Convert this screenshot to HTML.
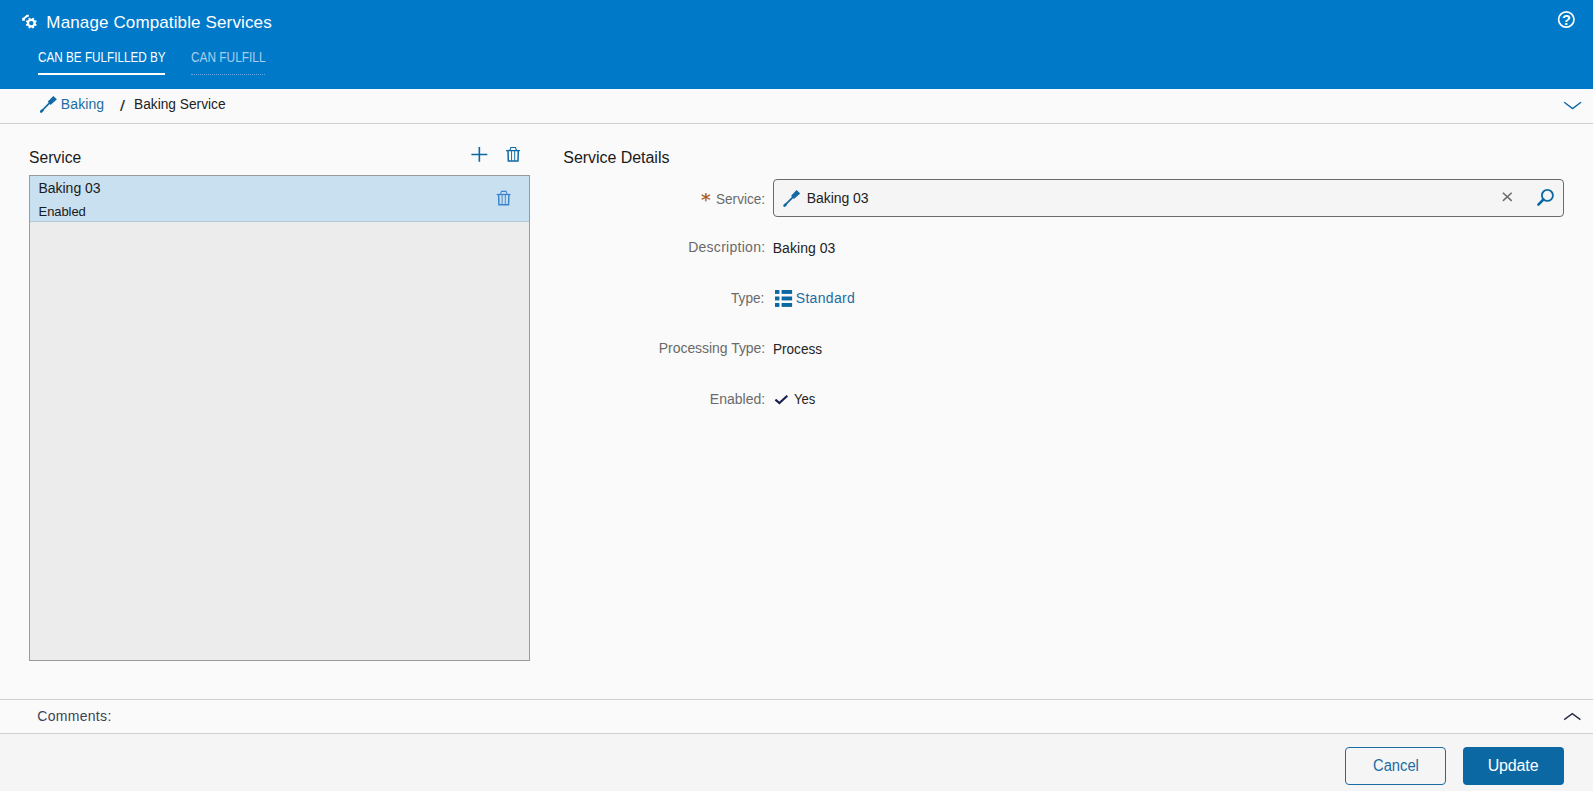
<!DOCTYPE html>
<html lang="en">
<head>
<meta charset="utf-8">
<title>Manage Compatible Services</title>
<style>
html,body{margin:0;padding:0;}
body{width:1593px;height:791px;position:relative;overflow:hidden;background:#fafafa;font-family:"Liberation Sans",sans-serif;}
.abs{position:absolute;}
.t{position:absolute;white-space:nowrap;line-height:1;font-weight:400;}
#hdr{left:0;top:0;width:1593px;height:89px;background:#0079c9;}
#tab1u{left:38px;top:73px;width:127px;height:2px;background:#fff;}
#tab2u{left:191px;top:74px;width:74px;height:0;border-top:1px dotted #62aae3;}
#bcline{left:0;top:123px;width:1593px;height:1px;background:#cfcfcf;}
#list{left:29px;top:175px;width:499px;height:484px;border:1px solid #9a9a9a;background:#ececec;}
#row{left:30px;top:176px;width:499px;height:45px;background:#c9e0f0;border-bottom:1px solid #b4c9d8;}
#inp{left:773px;top:179px;width:789px;height:36px;border:1px solid #6b6b6b;border-radius:4px;background:#f5f5f5;}
#cl1{left:0;top:699px;width:1593px;height:1px;background:#cfcfcf;}
#cl2{left:0;top:733px;width:1593px;height:1px;background:#cfcfcf;}
#foot{left:0;top:734px;width:1593px;height:57px;background:#f5f5f5;}
#btn1{left:1345px;top:747px;width:99px;height:36px;border:1px solid #1c6ca3;border-radius:4px;background:transparent;}
#btn2{left:1463px;top:747px;width:101px;height:38px;border-radius:4px;background:#0c68a3;}
svg{position:absolute;overflow:visible;}
</style>
</head>
<body>
<div id="hdr" class="abs"></div>
<div id="tab1u" class="abs"></div>
<div id="tab2u" class="abs"></div>
<div id="bcline" class="abs"></div>
<div id="list" class="abs"></div>
<div id="row" class="abs"></div>
<div id="inp" class="abs"></div>
<div id="cl1" class="abs"></div>
<div id="cl2" class="abs"></div>
<div id="foot" class="abs"></div>
<div id="btn1" class="abs"></div>
<div id="btn2" class="abs"></div>

<!-- ICONS -->
<svg id="ic_all" width="1593" height="791" viewBox="0 0 1593 791" style="left:0;top:0;">
<path d="M35.70,23.80 L36.75,24.41 L36.07,26.03 L34.90,25.72 L33.92,26.70 L34.23,27.87 L32.61,28.55 L32.00,27.50 L30.60,27.50 L29.99,28.55 L28.37,27.87 L28.68,26.70 L27.70,25.72 L26.53,26.03 L25.85,24.41 L26.90,23.80 L26.90,22.40 L25.85,21.79 L26.53,20.17 L27.70,20.48 L28.68,19.50 L28.37,18.33 L29.99,17.65 L30.60,18.70 L32.00,18.70 L32.61,17.65 L34.23,18.33 L33.92,19.50 L34.90,20.48 L36.07,20.17 L36.75,21.79 L35.70,22.40Z M33.50,23.10 A2.2,2.2 0 1,0 29.10,23.10 A2.2,2.2 0 1,0 33.50,23.10Z" fill="#fff" fill-rule="evenodd"/>
<rect x="22.2" y="17.7" width="2.7" height="3.1" rx="0.6" fill="#fff"/><rect x="26.2" y="14.7" width="2.6" height="2.0" rx="0.5" fill="#fff"/><path d="M23.9,18.6 L27.3,15.7" fill="none" stroke="#fff" stroke-width="2.0"/>
<circle cx="1566.3" cy="19.5" r="7.7" fill="none" stroke="#fff" stroke-width="1.7"/>
<text x="1566.35" y="24.5" text-anchor="middle" font-family="Liberation Sans, sans-serif" font-weight="700" font-size="14.5" fill="#fff">?</text>
<polygon points="53.30,95.90 56.90,99.30 50.60,104.90 47.80,101.50" fill="#1469a3"/><line x1="49.60" y1="102.90" x2="41.20" y2="111.50" stroke="#1469a3" stroke-width="1.75" stroke-linecap="round"/><line x1="42.40" y1="110.30" x2="41.20" y2="111.50" stroke="#1469a3" stroke-width="2.5" stroke-linecap="round"/>
<polygon points="796.60,190.10 800.20,193.50 793.90,199.10 791.10,195.70" fill="#1469a3"/><line x1="792.90" y1="197.10" x2="784.50" y2="205.70" stroke="#1469a3" stroke-width="1.75" stroke-linecap="round"/><line x1="785.70" y1="204.50" x2="784.50" y2="205.70" stroke="#1469a3" stroke-width="2.5" stroke-linecap="round"/>
<polyline points="1564.2,102.3 1572.6,108.6 1581.0,102.3" fill="none" stroke="#0c68a3" stroke-width="1.4"/>
<polyline points="1564.2,719.6 1572.3,713.6 1580.4,719.6" fill="none" stroke="#2a2f45" stroke-width="1.4"/>
<path d="M471.4,154.45 H487.3 M479.35,147.1 V161.8" fill="none" stroke="#0c68a3" stroke-width="1.6"/>
<g fill="none" stroke="#0c68a3"><path d="M508.00,151.00 L508.35,160.95 L517.95,160.95 L518.30,151.00" stroke-width="1.5"/><path d="M511.55,151.00 V160.60 M514.70,151.00 V160.60" stroke-width="0.95"/><path d="M506.10,150.60 H519.90" stroke-width="1.3"/><path d="M509.90,150.20 L510.90,147.45 L515.50,147.45 L516.50,150.20" stroke-width="1.05"/></g>
<g fill="none" stroke="#3b84cc"><path d="M498.60,194.90 L498.95,204.85 L508.55,204.85 L508.90,194.90" stroke-width="1.5"/><path d="M502.15,194.90 V204.50 M505.30,194.90 V204.50" stroke-width="0.95"/><path d="M496.70,194.50 H510.50" stroke-width="1.3"/><path d="M500.50,194.10 L501.50,191.35 L506.10,191.35 L507.10,194.10" stroke-width="1.05"/></g>
<path d="M1502.9,192.7 L1511.7,200.9 M1511.7,192.7 L1502.9,200.9" fill="none" stroke="#6a6a6a" stroke-width="1.5"/>
<circle cx="1547.4" cy="195.4" r="5.5" fill="none" stroke="#0c68a3" stroke-width="1.8"/>
<line x1="1543.4" y1="199.5" x2="1538.4" y2="204.6" stroke="#0c68a3" stroke-width="2.6" stroke-linecap="round"/>
<rect x="775" y="290.0" width="4.4" height="3.9" fill="#0c68a3"/>
<rect x="781.6" y="290.0" width="10.5" height="3.9" fill="#0c68a3"/>
<rect x="775" y="296.5" width="4.4" height="3.9" fill="#0c68a3"/>
<rect x="781.6" y="296.5" width="10.5" height="3.9" fill="#0c68a3"/>
<rect x="775" y="303.0" width="4.4" height="3.9" fill="#0c68a3"/>
<rect x="781.6" y="303.0" width="10.5" height="3.9" fill="#0c68a3"/>
<polyline points="775.4,399.6 779.4,403.0 787.3,395.7" fill="none" stroke="#17204d" stroke-width="2.1"/>
</svg>

<span id="t_title" class="t" style="left:46.35px;top:14.21px;font-size:17px;color:#fff;letter-spacing:0.130px;">Manage Compatible Services</span>
<span id="t_tab1" class="t" style="left:37.54px;top:50.15px;font-size:14px;color:#fff;letter-spacing:0.000px;transform:scaleX(0.8372);transform-origin:0 0;">CAN BE FULFILLED BY</span>
<span id="t_tab2" class="t" style="left:190.66px;top:50.15px;font-size:14px;color:#a9cfee;letter-spacing:0.000px;transform:scaleX(0.8472);transform-origin:0 0;">CAN FULFILL</span>
<span id="t_bc1" class="t" style="left:60.84px;top:96.95px;font-size:14px;color:#1c6ca3;letter-spacing:0.100px;">Baking</span>
<span id="t_bc2" class="t" style="left:120.17px;top:98.73px;font-size:14.5px;color:#2a2a2a;letter-spacing:0.000px;-webkit-text-stroke:0.1px #2a2a2a;transform:scaleX(1.2276);transform-origin:0 0;">/</span>
<span id="t_bc3" class="t" style="left:133.70px;top:96.75px;font-size:14px;color:#222;letter-spacing:0.000px;transform:scaleX(0.9802);transform-origin:0 0;">Baking Service</span>
<span id="t_h1" class="t" style="left:29.48px;top:150.36px;font-size:16px;color:#1a1a1a;letter-spacing:0.000px;transform:scaleX(0.9777);transform-origin:0 0;">Service</span>
<span id="t_h2" class="t" style="left:563.30px;top:150.16px;font-size:16px;color:#1a1a1a;letter-spacing:-0.043px;">Service Details</span>
<span id="t_li1" class="t" style="left:38.40px;top:181.15px;font-size:14px;color:#1a1a1a;letter-spacing:-0.003px;">Baking 03</span>
<span id="t_li2" class="t" style="left:38.59px;top:204.70px;font-size:13px;color:#1a1a1a;letter-spacing:-0.084px;">Enabled</span>
<span id="t_star" class="t" style="left:700.72px;top:192.01px;font-size:17px;color:#ad5712;letter-spacing:0.000px;font-family:'DejaVu Sans',sans-serif;-webkit-text-stroke:0.2px #ad5712;transform:scaleX(1.1445);transform-origin:0 0;">*</span>
<span id="t_l1" class="t" style="left:715.87px;top:191.65px;font-size:14px;color:#6a6a6a;letter-spacing:0.000px;transform:scaleX(0.9697);transform-origin:0 0;">Service:</span>
<span id="t_v1" class="t" style="left:806.73px;top:191.45px;font-size:14px;color:#222;letter-spacing:-0.045px;">Baking 03</span>
<span id="t_l2" class="t" style="left:688.15px;top:239.65px;font-size:14px;color:#6a6a6a;letter-spacing:0.276px;">Description:</span>
<span id="t_v2" class="t" style="left:772.76px;top:241.15px;font-size:14px;color:#222;letter-spacing:0.036px;">Baking 03</span>
<span id="t_l3" class="t" style="left:731.33px;top:291.35px;font-size:14px;color:#6a6a6a;letter-spacing:0.000px;transform:scaleX(0.9743);transform-origin:0 0;">Type:</span>
<span id="t_v3" class="t" style="left:795.76px;top:291.35px;font-size:14px;color:#1c6ca3;letter-spacing:0.323px;">Standard</span>
<span id="t_l4" class="t" style="left:658.80px;top:341.15px;font-size:14px;color:#6a6a6a;letter-spacing:-0.049px;">Processing Type:</span>
<span id="t_v4" class="t" style="left:772.83px;top:342.15px;font-size:14px;color:#222;letter-spacing:0.000px;transform:scaleX(0.9690);transform-origin:0 0;">Process</span>
<span id="t_l5" class="t" style="left:709.80px;top:391.85px;font-size:14px;color:#6a6a6a;letter-spacing:0.014px;">Enabled:</span>
<span id="t_v5" class="t" style="left:793.89px;top:391.85px;font-size:14px;color:#222;letter-spacing:0.000px;transform:scaleX(0.9294);transform-origin:0 0;">Yes</span>
<span id="t_cm" class="t" style="left:37.22px;top:709.25px;font-size:14px;color:#3a4458;letter-spacing:0.310px;">Comments:</span>
<span id="t_b1" class="t" style="left:1372.99px;top:758.36px;font-size:16px;color:#1c6ca3;letter-spacing:0.000px;transform:scaleX(0.9214);transform-origin:0 0;">Cancel</span>
<span id="t_b2" class="t" style="left:1487.70px;top:758.36px;font-size:16px;color:#fff;letter-spacing:-0.147px;">Update</span>
</body>
</html>
